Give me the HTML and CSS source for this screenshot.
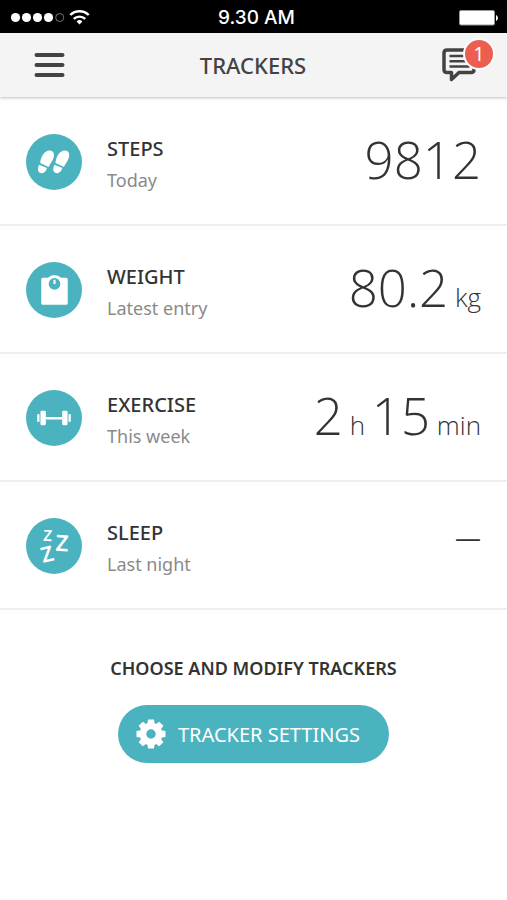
FILE: index.html
```html
<!DOCTYPE html>
<html lang="en">
<head>
<meta charset="utf-8">
<meta name="viewport" content="width=device-width, initial-scale=1">
<title>Trackers</title>
<link rel="stylesheet" href="styles.css">
</head>
<body>
<div class="status">
  <div class="status-side">
    <svg width="80" height="18" viewBox="0 0 80 18" aria-hidden="true">
      <g fill="#fff"><circle cx="5.500" cy="8.500" r="4.600"/><circle cx="16.500" cy="8.500" r="4.600"/><circle cx="27.500" cy="8.500" r="4.600"/><circle cx="38.500" cy="8.500" r="4.600"/></g>
      <circle cx="49.700" cy="8.500" r="4" fill="none" stroke="#777" stroke-width="1"/>
      <g fill="none" stroke="#fff" stroke-width="2.400"><path d="M60.300 6a13 13 0 0 1 18.400 0"/><path d="M63.800 9.900a8.200 8.200 0 0 1 11.400 0"/></g>
      <path d="M66.600 12.400a4.200 4.200 0 0 1 5.800 0L69.500 15.400z" fill="#fff"/>
    </svg>
  </div>
  <time class="clock">9.30 AM</time>
  <div class="status-side status-end">
    <svg width="40" height="18" viewBox="0 0 40 18" aria-hidden="true"><rect x=".5" y="1.500" width="35" height="14.500" rx="1.500" fill="#fff" stroke="#999" stroke-width="1"/><path d="M37 6c2.500.8 2.500 5.200 0 6z" fill="#fff"/></svg>
  </div>
</div>
<header class="bar">
  <button class="icon-button" type="button" aria-label="Menu">
    <svg width="32" height="26" viewBox="0 0 32 26"><path d="M3.500 3h26M3.500 13h26M3.500 23h26" stroke="#434343" stroke-width="4" stroke-linecap="round"/></svg>
  </button>
  <h1>TRACKERS</h1>
  <button class="icon-button messages" type="button" aria-label="Messages, 1 unread">
    <svg width="36" height="36" viewBox="0 0 36 36" fill="none" stroke="#434343"><path d="M6 3h24q3 0 3 3v16.500q0 3-3 3H18l-7.500 7v-7H6q-3 0-3-3V6q0-3 3-3z" stroke-width="3.500" stroke-linejoin="round"/><path d="M8.500 9h20M8.500 14.200h20M8.500 19.500h20" stroke-width="2.500"/></svg>
    <span class="badge">1</span>
  </button>
</header>
<main>
  <ul class="trackers">
    <li class="tracker">
      <svg class="disc" viewBox="0 0 55 55" fill="#fff" aria-hidden="true">
        <g id="shoe"><path d="M14 28.500C14.500 22 18 16.500 23 16.200c4.300-.2 5.200 3.900 3.900 7.600-1.200 3.400-3.600 5.700-4.700 8.600z"/><path d="M13 30.100l7.700 3.400c-1.400 4-3.700 5.900-6.400 4.800-3-1.200-3.300-4.600-1.300-8.200z"/></g>
        <use href="#shoe" x="15"/>
      </svg>
      <div class="info"><h2>STEPS</h2><p>Today</p></div>
      <div class="value">9812</div>
    </li>
    <li class="tracker">
      <svg class="disc" viewBox="0 0 55 55" aria-hidden="true">
        <path d="M16.500 15.500h4.800Q24.500 12.800 28 12.800t6.700 2.700h4.800q1.500 0 1.500 1.500v23.500q0 1.500-1.500 1.500h-23q-1.500 0-1.500-1.500V17q0-1.500 1.500-1.500z" fill="#fff"/>
        <circle cx="28" cy="21.500" r="5.700" fill="#4ab3bf"/><path d="M28 17.500v4" stroke="#fff" stroke-width="2"/>
      </svg>
      <div class="info"><h2>WEIGHT</h2><p>Latest entry</p></div>
      <div class="value">80.2<small> kg</small></div>
    </li>
    <li class="tracker">
      <svg class="disc" viewBox="0 0 55 55" fill="#fff" aria-hidden="true">
        <rect x="11" y="23.500" width="2.300" height="8" rx="1"/><rect x="14.200" y="20.500" width="5.300" height="14" rx="1"/><path d="M19.500 26.400h16v2.600h-16z"/><rect x="35.500" y="20.500" width="5.300" height="14" rx="1"/><rect x="41.700" y="23.500" width="2.300" height="8" rx="1"/>
      </svg>
      <div class="info"><h2>EXERCISE</h2><p>This week</p></div>
      <div class="value">2<small> h </small>15<small> min</small></div>
    </li>
    <li class="tracker">
      <svg class="disc zzz" viewBox="0 0 55 55" aria-hidden="true">
        <text x="17" y="22.500" font-size="15" transform="rotate(3 21 17)">Z</text>
        <text x="29" y="32.500" font-size="22" transform="rotate(3 35 25)">Z</text>
        <text x="14.500" y="43" font-size="21" transform="rotate(-14 20.500 35)">Z</text>
      </svg>
      <div class="info"><h2>SLEEP</h2><p>Last night</p></div>
      <div class="value empty">—</div>
    </li>
  </ul>
  <section class="modify">
    <h2>CHOOSE AND MODIFY TRACKERS</h2>
    <button class="settings" type="button">
      <svg width="30" height="30" viewBox="-15 -15 30 30" aria-hidden="true">
        <circle r="8" fill="none" stroke="#fff" stroke-width="6.500"/>
        <g fill="#fff"><path id="teeth" d="M-3.700-9.500L-3-14.500H3L3.700-9.500zM-3.700 9.500L-3 14.500H3L3.700 9.500z"/><use href="#teeth" transform="rotate(45)"/><use href="#teeth" transform="rotate(90)"/><use href="#teeth" transform="rotate(135)"/></g>
      </svg>
      <span>TRACKER SETTINGS</span>
    </button>
  </section>
</main>
</body>
</html>
```
FILE: styles.css
```css
* { box-sizing: border-box; }

body {
  margin: 0;
  background: #fff;
  color: #333;
  font-family: "Noto Sans", "Open Sans", sans-serif;
}

h1, h2, p, ul { margin: 0; padding: 0; }

button {
  border: 0;
  font: inherit;
  cursor: pointer;
}

svg { display: block; }

.status {
  display: flex;
  align-items: center;
  height: 33px;
  padding: 2px 8px 0 10px;
  background: #000;
  color: #fff;
}

.status-side { flex: 1; }

.status-end {
  display: flex;
  justify-content: flex-end;
}

.clock {
  padding-left: 4px;
  font: 500 19px/24px Inter, sans-serif;
}

.bar {
  display: flex;
  align-items: center;
  justify-content: space-between;
  height: 64px;
  padding: 0 30px 0 33px;
  background: #f4f4f4;
  box-shadow: 0 1px 3px rgba(0, 0, 0, 0.25);
}

.bar h1 {
  color: #434343;
  font-size: 22px;
  font-weight: 500;
  line-height: 30px;
}

.icon-button {
  padding: 0;
  background: none;
}

.messages { position: relative; }

.badge {
  position: absolute;
  top: -9px;
  right: -18px;
  width: 32px;
  height: 32px;
  border: 2px solid #fff;
  border-radius: 50%;
  background: #ec5f50;
  color: #fff;
  font-size: 19px;
  line-height: 28px;
}

.trackers {
  padding-top: 1px;
  list-style: none;
}

.tracker {
  display: flex;
  align-items: center;
  height: 128px;
  padding: 2px 26px 0;
  border-bottom: 2px solid #eee;
}

.disc {
  width: 56px;
  height: 56px;
  border-radius: 50%;
  background: #4ab3bf;
}

.zzz {
  fill: #fff;
  font-weight: 600;
}

.info {
  flex: 1;
  padding: 4px 0 0 25px;
}

.info h2 {
  font-size: 20px;
  font-weight: 500;
  line-height: 32px;
}

.info p {
  color: #8a8a8a;
  font-size: 18px;
  line-height: 30px;
}

.value {
  padding-bottom: 6px;
  font-family: "Open Sans", sans-serif;
  font-size: 51px;
  font-weight: 300;
  line-height: 72px;
  white-space: nowrap;
}

.value small {
  font-size: 26px;
  line-height: 26px;
}

.empty {
  padding-bottom: 18px;
  font-size: 26px;
  font-weight: 400;
}

.modify {
  display: flex;
  flex-direction: column;
  align-items: center;
  gap: 23px;
  padding: 44px 16px;
}

.modify h2 {
  font-size: 18px;
  font-weight: 600;
  line-height: 28px;
}

.settings {
  display: flex;
  align-items: center;
  gap: 12px;
  height: 58px;
  padding: 0 29px 0 18px;
  border-radius: 29px;
  background: #4ab3bf;
  color: #fff;
  font-size: 20px;
}
```
